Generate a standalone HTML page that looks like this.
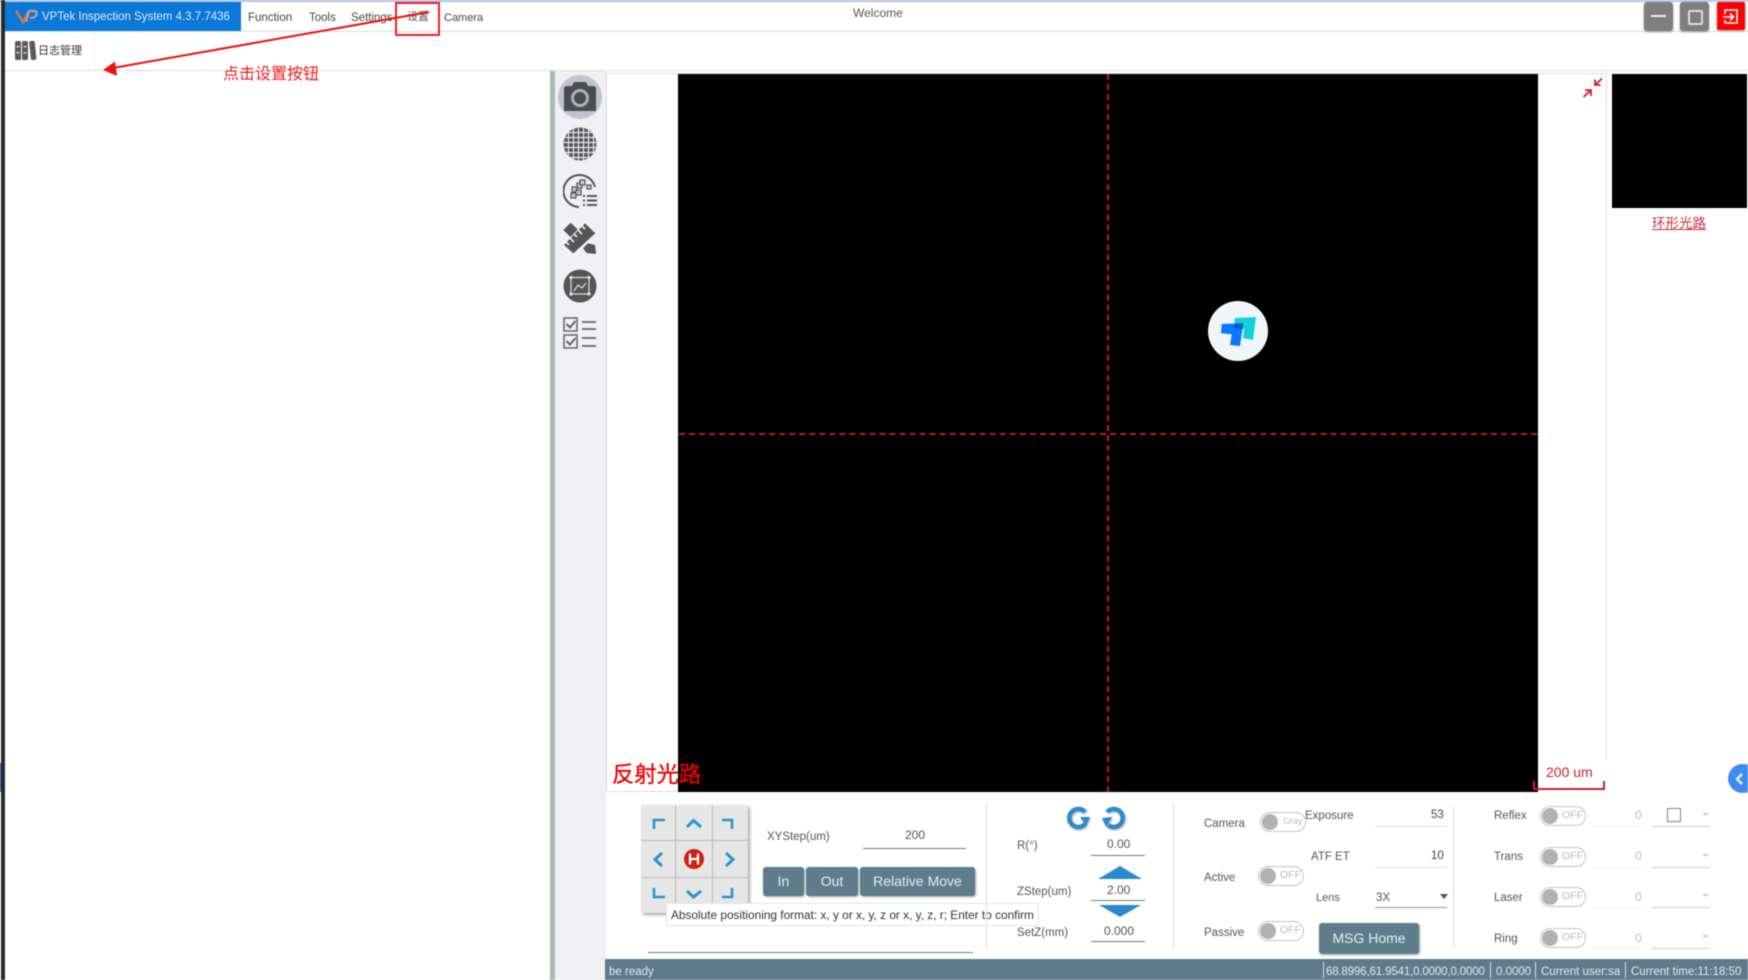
<!DOCTYPE html>
<html lang="zh"><head><meta charset="utf-8"><title>VPTek Inspection System</title>
<style>
html,body{margin:0;padding:0;background:#fff}
#p{position:relative;width:1748px;height:980px;overflow:hidden;background:#fff;font-family:"Liberation Sans","Noto Sans CJK SC",sans-serif;color:#555;font-size:12px;filter:blur(.4px)}
#p div,#p span.t{position:absolute}
.t{white-space:nowrap;line-height:16px}
.btn{background:#5f7c8c;color:#e8eef1;border-radius:3px;box-shadow:1px 1px 2px #9aa;text-align:center;font-size:14px;line-height:29px}
.tg{width:44px;height:18px;border:1px solid #c4c4c4;border-radius:10px;background:#fff}
.tg i{position:absolute;left:1px;top:1px;width:16px;height:16px;border-radius:50%;background:#b2b2b2}
.tg b{position:absolute;left:21px;top:1px;font:normal 10.5px/15px "Liberation Sans",sans-serif;color:#bbb}
.ln{height:1px;background:#777}
.lg{height:1px;background:#ddd}
.cell{background:#e6e6e6}
</style></head><body><div id="p">
<div style="left:0;top:0;width:1748px;height:2px;background:#aec3ea"></div>
<div style="left:1px;top:0;width:4px;height:980px;background:#2b2b2b"></div>
<div style="left:0;top:763px;width:1px;height:29px;background:#1050d0"></div>
<div style="left:5px;top:2px;width:236px;height:29px;background:#0a78d7"></div>
<svg style="position:absolute;left:15px;top:9px" width="23" height="15" viewBox="0 0 23 15"><path d="M1 1.500 L8 13 L13 3" fill="none" stroke="#d8764a" stroke-width="2.400"/><path d="M11 13 L14 2 H20 Q23 3 21 7 Q19 9 15 9" fill="none" stroke="#c99a8a" stroke-width="2.200"/></svg>
<span class="t" style="left:42px;top:9px;color:#dfeaf6;font-size:11.5px">VPTek Inspection System 4.3.7.7436</span>
<span class="t" style="left:248px;top:10px;color:#444;font-size:11.5px">Function</span>
<span class="t" style="left:309px;top:10px;color:#444;font-size:11.5px">Tools</span>
<span class="t" style="left:351px;top:10px;color:#444;font-size:11.5px">Settings</span>
<span class="t" style="left:407px;top:9px;color:#555;font-size:11px">设置</span>
<span class="t" style="left:444px;top:10px;color:#444;font-size:11px">Camera</span>
<span class="t" style="left:853px;top:5px;color:#555">Welcome</span>
<div style="left:5px;top:31px;width:1743px;height:1px;background:#ddd"></div>
<div style="left:5px;top:70px;width:1743px;height:1px;background:#ddd"></div>
<div style="left:94px;top:33px;width:1px;height:36px;background:#eee"></div>
<svg style="position:absolute;left:14px;top:40px" width="23" height="21" viewBox="0 0 23 21"><g fill="#5a5a5a"><rect x="1" y="1" width="6" height="19" rx="1.500"/><rect x="8" y="1" width="6" height="19" rx="1.500"/><rect x="16" y="1" width="5.500" height="19" rx="1.500" transform="rotate(-6 18 10)"/></g><g fill="#ccc"><rect x="2.500" y="6" width="3" height="1.500"/><rect x="9.500" y="6" width="3" height="1.500"/><rect x="2.500" y="12" width="3" height="1.500"/><rect x="9.500" y="12" width="3" height="1.500"/></g></svg>
<span class="t" style="left:38px;top:43px;color:#333;font-size:11px">日志管理</span>
<div style="left:1644px;top:2px;width:29px;height:29px;background:#7f7f7f;border-radius:3px;box-shadow:0 1px 2px #999"></div>
<div style="left:1651px;top:15px;width:15px;height:2px;background:#eee"></div>
<div style="left:1680px;top:2px;width:29px;height:29px;background:#7f7f7f;border-radius:3px;box-shadow:0 1px 2px #999"></div>
<div style="left:1688px;top:10px;width:11px;height:11px;border:2px solid #ddd;border-radius:2px"></div>
<div style="left:1717px;top:2px;width:28px;height:28px;background:#f00;border-radius:2px;box-shadow:0 1px 2px #999"></div>
<svg style="position:absolute;left:1722px;top:8px" width="18" height="18" viewBox="0 0 18 18" fill="none" stroke="#fff" stroke-width="1.600"><path d="M3 6 V2 H15 V15 H3 V12"/><path d="M1 9 H11 M8 5.500 L11.500 9 L8 12.500"/></svg>

<!-- splitter/sidebar -->
<div style="left:550px;top:71px;width:5px;height:909px;background:#a9bab8"></div>
<div style="left:555px;top:71px;width:51px;height:909px;background:#f0f0f5"></div>
<div style="left:558px;top:75px;width:44px;height:44px;border-radius:50%;background:#bdc6cd"></div>
<svg style="position:absolute;left:560px;top:77px" width="40" height="40" viewBox="0 0 40 40"><path d="M4 12 Q4 9 7 9 H12 L14 5 H26 L28 9 H33 Q36 9 36 12 V34 H4Z" fill="#4d4d4f"/><circle cx="20" cy="21" r="7.500" fill="none" stroke="#a9b3bb" stroke-width="3"/></svg>
<svg style="position:absolute;left:563px;top:127px" width="34" height="34" viewBox="0 0 34 34"><defs><clipPath id="c"><circle cx="17" cy="17" r="16.500"/></clipPath></defs><g clip-path="url(#c)"><rect width="34" height="34" fill="#555"/><path d="M0 5.500H34M0 10.500H34M0 15.500H34M0 20.500H34M0 25.500H34M0 30.500H34M5.500 0V34M10.500 0V34M15.500 0V34M20.500 0V34M25.500 0V34M30.500 0V34" stroke="#e8e8ee" stroke-width="1.200"/></g></svg>
<svg style="position:absolute;left:563px;top:174px" width="34" height="34" viewBox="0 0 34 34" fill="none" stroke="#555"><path d="M32 13 A16 16 0 1 0 16 33" stroke-width="2"/><g stroke-width="1.200" fill="#c8c8cc"><rect x="9" y="13" width="5" height="5"/><rect x="14" y="9" width="5" height="5"/><rect x="17" y="6" width="5" height="5"/><rect x="8" y="19" width="5" height="5"/><rect x="13" y="16" width="5" height="5"/><rect x="24" y="11" width="4" height="4"/></g><path d="M20 22H22M24 22H34M20 26.500H22M24 26.500H34M20 31H22M24 31H34" stroke-width="2"/></svg>
<svg style="position:absolute;left:563px;top:221px" width="34" height="34" viewBox="0 0 34 34"><path d="M0.300 9 L7.700 1.700 L15.300 9 L8.700 17.300Z" fill="#555"/><path d="M20 27.300 L25 22.300 L32 24 L33 33 L23.700 32Z" fill="#555"/><path d="M22 1.700 L33 12.300 L10.300 33 L0.300 24Z" fill="#555" stroke="#f0f0f5" stroke-width="1"/><path d="M19 5l3 3M15 9l4 4M11 13l3 3M7 17l4 4M3 21l3 3" stroke="#f0f0f5" stroke-width="1.600"/></svg>
<svg style="position:absolute;left:563px;top:269px" width="34" height="34" viewBox="0 0 34 34"><circle cx="17" cy="17" r="16.500" fill="#555"/><path d="M8 8.500H26V25H8Z" fill="none" stroke="#ddd" stroke-width="1.200"/><path d="M11 22 L15 16 L19 19 L23 14" fill="none" stroke="#ddd" stroke-width="1.200"/><g fill="#ddd"><rect x="6.500" y="7" width="3" height="3"/><rect x="24.500" y="7" width="3" height="3"/><rect x="6.500" y="23.500" width="3" height="3"/><rect x="24.500" y="23.500" width="3" height="3"/></g></svg>
<svg style="position:absolute;left:563px;top:317px" width="34" height="32" viewBox="0 0 34 32" fill="none" stroke="#666"><rect x="1" y="1" width="13" height="13" stroke-width="1.500"/><rect x="1" y="18" width="13" height="13" stroke-width="1.500"/><path d="M3.500 7L7 10.500L12.500 4M3.500 24L7 27.500L12.500 21" stroke-width="2"/><path d="M19 5H33M19 12H33M19 21H33M19 29H33" stroke-width="1.700"/></svg>

<!-- viewer -->
<div style="left:606px;top:73px;width:1001px;height:719px;background:#fff;border:1px solid #ddd;box-sizing:border-box"></div>
<div style="left:678px;top:74px;width:860px;height:718px;background:#000"></div>
<div style="left:1107px;top:74px;width:0;height:718px;border-left:2px dashed #c4161c"></div>
<div style="left:679px;top:433px;width:858px;height:0;border-top:2px dashed #c4161c"></div>
<div style="left:1208px;top:301px;width:60px;height:60px;border-radius:50%;background:#f0f6fb"></div>
<svg style="position:absolute;left:1218px;top:314px" width="40" height="34" viewBox="0 0 40 34"><path d="M17 4 L38 3 L35 26 L25 24 L26 15 L16 14Z" fill="#12d0dc"/><path d="M3.700 10 L25.300 9.300 L22 32 L12 31 L13.700 20.300 L3 19.300Z" fill="#0a78ff"/><path d="M17 9.800 L25.300 9.300 L24 15 L16 14Z" fill="#0a50c8"/></svg>
<svg style="position:absolute;left:1582px;top:76px" width="22" height="22" viewBox="0 0 22 22" fill="none" stroke="#d3163c" stroke-width="1.800"><path d="M20 2.500 L13.500 8.500 M13 3.500 V9 H18.500 M1.500 21 L8 15 M3 14 H9 V20"/></svg>
<span class="t" style="left:612px;top:761px;color:#e00;font-size:22.300px;line-height:28px;-webkit-text-stroke:.3px #e00">反射光路</span>
<div style="left:1538px;top:760px;width:69px;height:32px;background:#fff"></div>
<span class="t" style="left:1546px;top:764px;color:#c8202f;font-size:14px">200 um</span>
<svg style="position:absolute;left:1532px;top:778px" width="74" height="14" viewBox="0 0 74 14" fill="none" stroke="#c8202f" stroke-width="2"><path d="M2 3 V11 H72 V3"/></svg>
<div style="left:1612px;top:74px;width:135px;height:134px;background:#000"></div>
<span class="t" style="left:1652px;top:216px;color:#c8323c;font-size:13.500px;text-decoration:underline">环形光路</span>
<div style="left:1728px;top:764px;width:30px;height:29px;border-radius:15px;background:#3f8cf0"></div>
<svg style="position:absolute;left:1734px;top:772px" width="12" height="14" viewBox="0 0 12 14" fill="none" stroke="#e8f0ff" stroke-width="2.400"><path d="M8 2 L3 7 L8 12"/></svg>

<!-- d-pad -->
<div style="left:641px;top:805px;width:107px;height:108px;background:#b8b8b8;box-shadow:2px 2px 3px #aaa"></div>
<div class="cell" style="left:641px;top:805px;width:34px;height:35px"></div><div class="cell" style="left:676px;top:805px;width:36px;height:35px"></div><div class="cell" style="left:713px;top:805px;width:35px;height:35px"></div>
<div class="cell" style="left:641px;top:841px;width:34px;height:36px"></div><div class="cell" style="left:676px;top:841px;width:36px;height:36px"></div><div class="cell" style="left:713px;top:841px;width:35px;height:36px"></div>
<div class="cell" style="left:641px;top:878px;width:34px;height:35px"></div><div class="cell" style="left:676px;top:878px;width:36px;height:35px"></div><div class="cell" style="left:713px;top:878px;width:35px;height:35px"></div>
<svg style="position:absolute;left:641px;top:805px" width="108" height="108" viewBox="0 0 108 108" fill="none" stroke="#2a93d0" stroke-width="2.600"><path d="M13 24 V15 H24"/><path d="M46 22 L52.500 15.500 L60 22" stroke-width="3"/><path d="M81 15 H91 V24"/><path d="M21 48 L14 54.500 L21 61" stroke-width="3"/><path d="M85 48 L92 54.500 L85 61" stroke-width="3"/><path d="M13 83 V92 H24"/><path d="M46 86 L52.500 92 L60 86" stroke-width="3"/><path d="M81 92 H91 V83"/><circle cx="53" cy="54" r="10" fill="#cf1f10" stroke="none"/><path d="M49 48.500 V59.500 M57 48.500 V59.500 M49 54 H57" stroke="#fff" stroke-width="2.300"/></svg>

<span class="t" style="left:767px;top:829px;color:#555;font-size:11.500px">XYStep(um)</span>
<span class="t" style="left:905px;top:827px;font-size:12px">200</span>
<div class="ln" style="left:863px;top:848px;width:103px"></div>
<div class="btn" style="left:763px;top:867px;width:41px">In</div>
<div class="btn" style="left:806px;top:867px;width:52px">Out</div>
<div class="btn" style="left:860px;top:867px;width:115px">Relative Move</div>
<div style="left:666px;top:903px;width:371px;height:21px;background:#fff;border:1px solid #e4e4e4;box-sizing:content-box"></div>
<span class="t" style="left:671px;top:907px;color:#333;font-size:11.850px">Absolute positioning format: x, y or x, y, z or x, y, z, r; Enter to confirm</span>
<div class="ln" style="left:648px;top:952px;width:325px"></div>
<div class="lg" style="left:986px;top:802px;width:1px;height:148px"></div>
<div class="lg" style="left:1173px;top:802px;width:1px;height:148px"></div>
<div class="lg" style="left:1453px;top:806px;width:1px;height:142px"></div>

<!-- rotate -->
<svg style="position:absolute;left:1064px;top:805px;filter:drop-shadow(1px 1px 1px #aaa)" width="64" height="30" viewBox="0 0 64 30" fill="none" stroke="#2a8ccc" stroke-width="4.500"><path d="M21 7 A9 9 0 1 0 21 19"/><path d="M16 12 L26 12 L22 21Z" fill="#2a8ccc" stroke="none"/><path d="M43 7 A9 9 0 1 1 44 20"/><path d="M38 13 L48 12 L42 22Z" fill="#2a8ccc" stroke="none"/></svg>
<span class="t" style="left:1017px;top:838px;font-size:11.500px">R(°)</span>
<span class="t" style="left:1107px;top:836px;font-size:12px">0.00</span>
<div class="ln" style="left:1091px;top:855px;width:54px"></div>
<svg style="position:absolute;left:1098px;top:866px" width="44" height="13"><path d="M0 13L22 0L44 13Z" fill="#2a8ccc"/></svg>
<span class="t" style="left:1017px;top:884px;font-size:11.500px">ZStep(um)</span>
<span class="t" style="left:1107px;top:882px;font-size:12px">2.00</span>
<div class="ln" style="left:1091px;top:900px;width:54px"></div>
<svg style="position:absolute;left:1099px;top:905px" width="42" height="12"><path d="M0 0L42 0L21 12Z" fill="#2a8ccc"/></svg>
<span class="t" style="left:1017px;top:925px;font-size:11.500px">SetZ(mm)</span>
<span class="t" style="left:1104px;top:923px;font-size:12px">0.000</span>
<div class="ln" style="left:1091px;top:941px;width:54px"></div>

<!-- camera col -->
<span class="t" style="left:1204px;top:816px;font-size:11.500px">Camera</span>
<span class="t" style="left:1204px;top:870px;font-size:11.500px">Active</span>
<span class="t" style="left:1204px;top:925px;font-size:11.500px">Passive</span>
<div class="tg" style="left:1260px;top:812px"><i></i><b style="font-size:9px;left:22px">Gray</b></div>
<div class="tg" style="left:1258px;top:866px"><i></i><b>OFF</b></div>
<div class="tg" style="left:1258px;top:921px"><i></i><b>OFF</b></div>
<span class="t" style="left:1305px;top:808px;font-size:11.500px">Exposure</span>
<span class="t" style="left:1311px;top:849px;font-size:11.500px">ATF ET</span>
<span class="t" style="left:1316px;top:890px;font-size:11px">Lens</span>
<span class="t" style="left:1431px;top:807px;font-size:11.500px;color:#444">53</span>
<span class="t" style="left:1431px;top:848px;font-size:11.500px;color:#444">10</span>
<span class="t" style="left:1376px;top:890px;font-size:11.500px">3X</span>
<div class="lg" style="left:1375px;top:826px;width:72px"></div>
<div class="lg" style="left:1375px;top:867px;width:72px"></div>
<div class="ln" style="left:1375px;top:907px;width:72px;background:#999"></div>
<svg style="position:absolute;left:1440px;top:894px" width="8" height="5"><path d="M0 0H8L4 5Z" fill="#555"/></svg>
<div class="btn" style="left:1319px;top:923px;width:100px;height:31px;line-height:31px">MSG Home</div>

<!-- light col -->
<span class="t" style="left:1494px;top:808px;font-size:11.500px">Reflex</span>
<span class="t" style="left:1494px;top:849px;font-size:11.500px">Trans</span>
<span class="t" style="left:1494px;top:890px;font-size:11.500px">Laser</span>
<span class="t" style="left:1494px;top:931px;font-size:11.500px">Ring</span>
<div class="tg" style="left:1540px;top:806px"><i></i><b>OFF</b></div>
<div class="tg" style="left:1540px;top:847px"><i></i><b>OFF</b></div>
<div class="tg" style="left:1540px;top:887px"><i></i><b>OFF</b></div>
<div class="tg" style="left:1540px;top:928px"><i></i><b>OFF</b></div>
<span class="t" style="left:1635px;top:807px;color:#bbb">0</span>
<span class="t" style="left:1635px;top:848px;color:#bbb">0</span>
<span class="t" style="left:1635px;top:889px;color:#bbb">0</span>
<span class="t" style="left:1635px;top:930px;color:#bbb">0</span>
<div class="lg" style="left:1591px;top:826px;width:54px;background:#eee"></div>
<div class="lg" style="left:1591px;top:867px;width:54px;background:#eee"></div>
<div class="lg" style="left:1591px;top:907px;width:54px;background:#eee"></div>
<div class="lg" style="left:1591px;top:948px;width:54px;background:#eee"></div>
<div class="lg" style="left:1652px;top:826px;width:58px;background:#ccc"></div>
<div class="lg" style="left:1652px;top:867px;width:58px;background:#ccc"></div>
<div class="lg" style="left:1652px;top:907px;width:58px;background:#ccc"></div>
<div class="lg" style="left:1652px;top:948px;width:58px;background:#ccc"></div>
<div style="left:1667px;top:808px;width:12px;height:12px;border:1.500px solid #808080"></div>
<svg style="position:absolute;left:1702px;top:810px" width="8" height="130" fill="#ccc"><path d="M0 3H7L3.500 6Z"/><path d="M0 44H7L3.500 47Z"/><path d="M0 84H7L3.500 87Z"/><path d="M0 125H7L3.500 128Z"/></svg>

<!-- status -->
<div style="left:605px;top:959px;width:1143px;height:21px;background:#5f7a8a"></div>
<span class="t" style="left:609px;top:964px;color:#e4eaee;font-size:11.500px">be ready</span>
<div style="left:1323px;top:962px;width:1px;height:16px;background:#dde"></div>
<span class="t" style="left:1326px;top:964px;color:#e4eaee;font-size:11.500px;letter-spacing:-.15px">68.8996,61.9541,0.0000,0.0000</span>
<div style="left:1490px;top:962px;width:1px;height:16px;background:#dde"></div>
<span class="t" style="left:1496px;top:964px;color:#e4eaee;font-size:11.500px">0.0000</span>
<div style="left:1535px;top:962px;width:1px;height:16px;background:#dde"></div>
<span class="t" style="left:1541px;top:964px;color:#e4eaee;font-size:11.500px">Current user:sa</span>
<div style="left:1625px;top:962px;width:1px;height:16px;background:#dde"></div>
<span class="t" style="left:1631px;top:964px;color:#e4eaee;font-size:11.500px">Current time:11:18:50</span>

<!-- annotations -->
<div style="left:395px;top:2px;width:41px;height:30px;border:2px solid #ee1c25"></div>
<svg style="position:absolute;left:95px;top:5px" width="340" height="75" viewBox="0 0 340 75"><path d="M334 7 L18 63" stroke="#f01010" stroke-width="2"/><path d="M8 65 L20 56.500 L22 71Z" fill="#f01010"/></svg>
<span class="t" style="left:223px;top:65px;color:#ee1c25;font-size:16px;line-height:20px">点击设置按钮</span>
</div></body></html>
